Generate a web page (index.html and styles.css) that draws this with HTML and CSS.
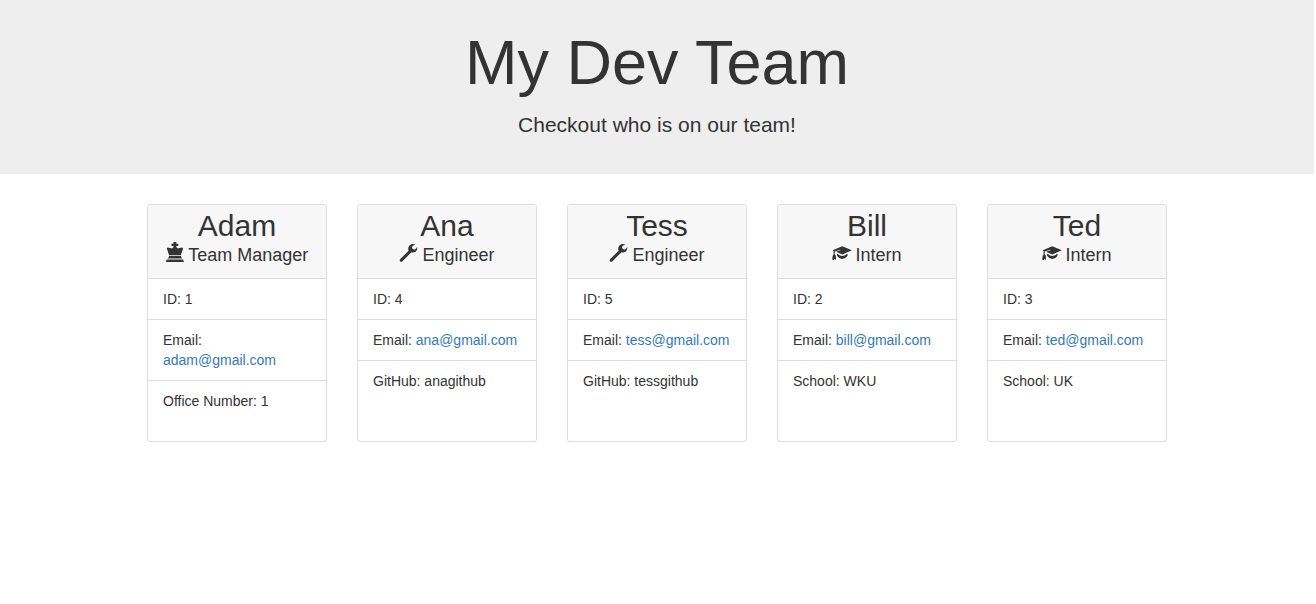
FILE: index.html
```html
<!DOCTYPE html>
<html lang="en">
<head>
<meta charset="utf-8">
<meta name="viewport" content="width=device-width, initial-scale=1">
<title>My Dev Team</title>
<link rel="stylesheet" href="styles.css">
</head>
<body>
<svg class="symbols" aria-hidden="true">
  <symbol id="king" viewBox="0 0 18 20">
    <path d="M7.500 0h2.800v1.700h2v2.400h-2v1.100c.8.300 1.200.7 1.400 1.300l4.300-.9c.8.100 1.100.7.900 1.400L14.900 13H3L1 7c-.2-.7.1-1.300.900-1.400l4.300.9c.2-.6.6-1 1.300-1.300V4.100h-2V1.700h2zM3 13.700h12c0 1.300.500 2.200 1.400 2.900H1.600C2.500 15.900 3 15 3 13.700zM.8 17.500H17l1 2.500H-.2z"/>
  </symbol>
  <symbol id="wrench" viewBox="0 0 18 20">
    <path d="M16.300 2.700l-2.700 1.100-.7 2 1.200 1.500 2 .1 2.200-2.300c.1 2.300-.7 4.200-2.300 5-1.200.6-2.400.5-3.500.1L3.200 19.400c-.7.600-1.500.6-2.100 0s-.6-1.500 0-2.100l8.500-8.600c-.7-1.600-.5-3.500.7-4.900 1.500-1.700 3.900-2.200 6-1.100z"/>
  </symbol>
  <symbol id="cap" viewBox="1 0 18 20">
    <path d="M11.300 4.200l9.500 4-9.500 4.300-6.200-2.800 4.400-1.400-.3-.6-5.500 1.800v3.100l1.100 1 .3 4.700-1.400-1.500-1 1.500-.9-.7-.8.300.8-4.400.8-.9V9.200l-.9-1z"/>
    <path d="M6 11.700l1.200.6c1.200 1 2.600 1.700 4.100 1.700s2.900-.7 4.100-1.700l1.200-.6v1.900c-1.400 2.200-3.100 3.300-5.300 3.300S7.400 15.800 6 13.600z"/>
  </symbol>
</svg>

<header class="banner">
  <h1 class="banner-title">My Dev Team</h1>
  <p class="banner-text">Checkout who is on our team!</p>
</header>

<main class="team">
  <article class="card">
    <div class="card-header">
      <h2 class="name">Adam</h2>
      <h3 class="role"><svg class="icon" aria-hidden="true"><use href="#king"/></svg> Team Manager</h3>
    </div>
    <ul class="details">
      <li class="detail">ID: 1</li>
      <li class="detail">Email: <a class="link" href="mailto:adam@gmail.com">adam@gmail.com</a></li>
      <li class="detail">Office Number: 1</li>
    </ul>
  </article>
  <article class="card">
    <div class="card-header">
      <h2 class="name">Ana</h2>
      <h3 class="role"><svg class="icon" aria-hidden="true"><use href="#wrench"/></svg> Engineer</h3>
    </div>
    <ul class="details">
      <li class="detail">ID: 4</li>
      <li class="detail">Email: <a class="link" href="mailto:ana@gmail.com">ana@gmail.com</a></li>
      <li class="detail">GitHub: anagithub</li>
    </ul>
  </article>
  <article class="card">
    <div class="card-header">
      <h2 class="name">Tess</h2>
      <h3 class="role"><svg class="icon" aria-hidden="true"><use href="#wrench"/></svg> Engineer</h3>
    </div>
    <ul class="details">
      <li class="detail">ID: 5</li>
      <li class="detail">Email: <a class="link" href="mailto:tess@gmail.com">tess@gmail.com</a></li>
      <li class="detail">GitHub: tessgithub</li>
    </ul>
  </article>
  <article class="card">
    <div class="card-header">
      <h2 class="name">Bill</h2>
      <h3 class="role"><svg class="icon" aria-hidden="true"><use href="#cap"/></svg> Intern</h3>
    </div>
    <ul class="details">
      <li class="detail">ID: 2</li>
      <li class="detail">Email: <a class="link" href="mailto:bill@gmail.com">bill@gmail.com</a></li>
      <li class="detail">School: WKU</li>
    </ul>
  </article>
  <article class="card">
    <div class="card-header">
      <h2 class="name">Ted</h2>
      <h3 class="role"><svg class="icon" aria-hidden="true"><use href="#cap"/></svg> Intern</h3>
    </div>
    <ul class="details">
      <li class="detail">ID: 3</li>
      <li class="detail">Email: <a class="link" href="mailto:ted@gmail.com">ted@gmail.com</a></li>
      <li class="detail">School: UK</li>
    </ul>
  </article>
</main>
</body>
</html>
```
FILE: styles.css
```css
* {
  box-sizing: border-box;
}

body {
  margin: 0 2px 0 0;
  background: #fff;
  color: #333;
  font: 14px/20px "Liberation Sans", Arial, sans-serif;
}

.symbols {
  display: none;
}

.banner {
  padding: 28px 16px 34px;
  background: #eee;
  text-align: center;
}

.banner-title {
  margin: 0 0 13px;
  font-size: 63px;
  font-weight: 400;
  line-height: 69px;
}

.banner-text {
  margin: 0;
  font-size: 21px;
  line-height: 30px;
}

.team {
  display: flex;
  flex-wrap: wrap;
  justify-content: center;
  gap: 30px;
  padding: 30px 16px;
}

.card {
  display: flex;
  flex-direction: column;
  width: 180px;
  min-height: 238px;
  border: 1px solid #ddd;
  border-radius: 3px;
  overflow: hidden;
}

.card-header {
  padding: 4px 8px 11px;
  background: #f7f7f7;
  text-align: center;
}

.name {
  margin: 0;
  font-size: 30px;
  font-weight: 400;
  line-height: 33px;
}

.role {
  margin: 0;
  font-size: 18px;
  font-weight: 400;
  line-height: 24px;
}

.icon,
.symbols symbol {
  overflow: visible;
}

.icon {
  width: 18px;
  height: 20px;
  fill: currentColor;
  vertical-align: -1px;
}

.details {
  margin: 0;
  padding: 0;
  list-style: none;
}

.detail {
  padding: 10px 15px;
  border-top: 1px solid #ddd;
}

.link {
  color: #337ab7;
  text-decoration: none;
}
```
